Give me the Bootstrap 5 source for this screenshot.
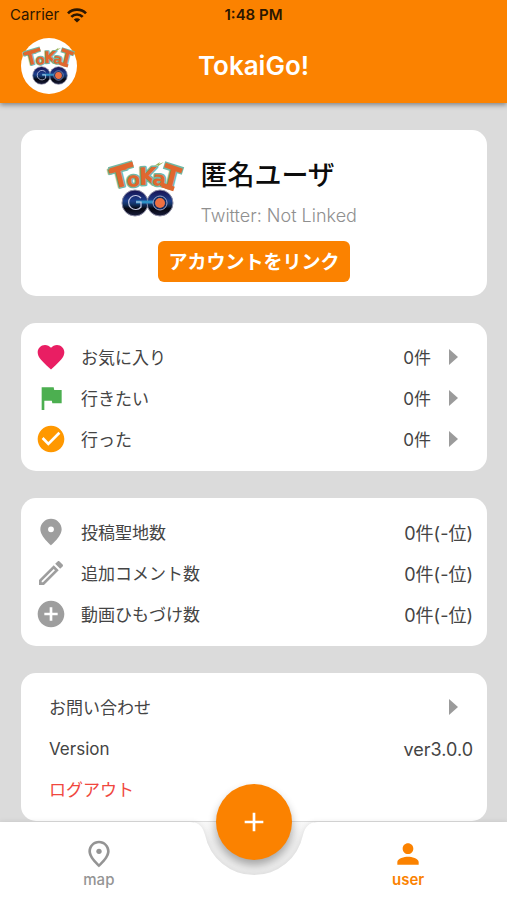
<!DOCTYPE html>
<html lang="ja">
<head>
<meta charset="utf-8">
<meta name="viewport" content="width=device-width, initial-scale=1">
<title>TokaiGo!</title>
<link href="https://cdn.jsdelivr.net/npm/bootstrap@5.3.0/dist/css/bootstrap.min.css" rel="stylesheet">
<style>
  :root { --brand: #fb8200; }
  body { font-family: Inter, "Noto Sans CJK JP", sans-serif; background: #dbdbdb; color: #444; }
  a { color: inherit; text-decoration: none; }
  .app-top { background: var(--brand); box-shadow: 0 2px 5px rgba(0,0,0,.4); z-index: 2; }
  .status-bar { height: 30px; font-size: 15px; line-height: 30px; color: #2b1600; padding: 0 10px; }
  .side-cell { flex: 1 1 0; }
  .title-bar { height: 73px; padding: 0 21px 2px; }
  .title-bar h1 { font-size: 26px; line-height: 30px; font-weight: 600; color: #fff; }
  .avatar { width: 56px; height: 56px; background: #fff; }
  .app-main { padding: 27px 20px 0 21px; gap: 27px; }
  .panel { background: #fff; border-radius: 15px; flex: none; }
  .profile { padding: 29px 0 14px; }
  .logo-side { flex: 0 0 38.5%; padding: 2px 16px 0 0; }
  .logo text { font-family: "DejaVu Sans", sans-serif; font-weight: 700; fill: #e0672f; stroke: #72b8a4; stroke-width: 3px; paint-order: stroke; stroke-linejoin: round; }
  .user-name { font-size: 27px; line-height: 34px; font-weight: 500; color: #0c0c0c; }
  .link-state { font-size: 18px; line-height: 24px; font-weight: 300; color: #8f8f8f; margin-top: 11px; }
  .btn-brand { --bs-btn-bg: var(--brand); --bs-btn-color: #fff; --bs-btn-hover-bg: #e67600; --bs-btn-hover-color: #fff;
    font-size: 19px; line-height: 27px; font-weight: 700; padding: 8px 10px 6px; border: 0; border-radius: 6px; margin-top: 13px; }
  .rows { padding: 13px 14px 12px; font-size: 17px; line-height: 25px; }
  .rows span, .plain-btn { padding-top: 3px; }
  .rows .val { font-size: 18px; }
  .indent { padding-left: 14px; }
  .line { height: 41px; }
  .ico { width: 32px; height: 32px; margin-right: 14px; flex: none; }
  .arrow { width: 9px; height: 16px; fill: #9b9b9b; margin: 0 15px 0 18px; flex: none; }
  .plain-btn { color: #f0473e; background: none; border: 0; }
  .app-nav { height: 78px; z-index: 3; }
  .nav-bg { filter: drop-shadow(0 -1px 2px rgba(0,0,0,.07)); }
  .nav-bg .fill { background: #fff; flex: 1 1 0; }
  .nav-bg svg { width: 136px; height: 78px; flex: none; display: block; }
  .tab { width: 39%; font-size: 15px; line-height: 20px; font-weight: 500; color: #949494; padding-top: 16px; }
  .tab.on { color: var(--brand); font-weight: 600; }
  .tab svg { width: 32px; height: 32px; fill: currentColor; }
  .fab { width: 76px; height: 76px; top: -38px; left: calc(50% - 38px); background: var(--brand); border: 0;
    box-shadow: 0 5px 9px rgba(0,0,0,.3); padding: 0; }
  .under { top: 0; left: calc(50% - 60px); width: 120px; height: 58px; background: linear-gradient(#f8f8f8, #ececec 35%); border-radius: 0 0 56px 56px; }
</style>
<script src="https://cdn.jsdelivr.net/npm/bootstrap@5.3.0/dist/js/bootstrap.bundle.min.js"></script>
</head>
<body>
<svg width="0" height="0" class="position-absolute" aria-hidden="true">
  <defs>
    <linearGradient id="disc" x1="0" y1="0" x2="0" y2="1">
      <stop offset="0" stop-color="#17104f"/><stop offset=".42" stop-color="#1c3f8c"/>
      <stop offset=".55" stop-color="#123263"/><stop offset=".72" stop-color="#05060f"/><stop offset="1" stop-color="#191d3d"/>
    </linearGradient>
  </defs>
  <symbol id="discs" viewBox="0 0 76 56">
    <circle cx="27" cy="42" r="13" fill="url(#disc)" stroke="#8b8ba4" stroke-width="1"/>
    <circle cx="52" cy="42" r="13" fill="url(#disc)" stroke="#8b8ba4" stroke-width="1"/>
    <path d="M28 41h17" stroke="#2d91c5" stroke-width="3"/>
    <path d="M33 37a7 7 0 1 0 0 9v-5h-5" fill="none" stroke="#c4c8e4" stroke-width="1.2"/>
    <circle cx="52" cy="42" r="7" fill="#102c61" stroke="#9aa5cb" stroke-width="1"/>
    <circle cx="52" cy="42" r="5" fill="#ee7041"/>
  </symbol>
  <symbol id="tri" viewBox="0 0 9 16"><path d="M0 0L9 8L0 16z"/></symbol>
</svg>

<div class="d-flex flex-column vh-100 overflow-hidden">
  <header class="app-top position-relative">
    <div class="status-bar d-flex">
      <div class="side-cell d-flex align-items-center">
        <span>Carrier</span>
        <svg class="ms-2" width="20" height="15" viewBox="0 0 20 15" fill="none" stroke="#2b1600" stroke-width="2.7" aria-hidden="true">
          <path d="M1 5.4a12.8 12.8 0 0 1 18 0M4.3 8.9a8 8 0 0 1 11.4 0"/><path d="M10 14.6L6.8 11.5a4.6 4.6 0 0 1 6.4 0z" fill="#2b1600" stroke="none"/>
        </svg>
      </div>
      <span class="fw-semibold">1:48 PM</span>
      <div class="side-cell"></div>
    </div>
    <div class="title-bar d-flex align-items-center">
      <div class="side-cell">
        <div class="avatar rounded-circle d-flex align-items-center justify-content-center">
          <svg class="logo overflow-visible" width="52" height="38" viewBox="0 0 76 56" role="img" aria-label="Tokai GO">
            <path d="M1 10L25 3M56 4L75 10" stroke="#72b8a4" stroke-width="8"/>
            <text font-size="27" transform="translate(5 28) rotate(-14)">T</text>
            <text font-size="20" transform="translate(19 26) rotate(-4)">o</text>
            <text font-size="24" transform="translate(31 24) rotate(-2)">K</text>
            <text font-size="20" transform="translate(44 24) rotate(6)">a</text>
            <text font-size="28" transform="translate(56 26) rotate(14)">I</text>
            <path d="M2 10L25 3M57 4L74 10M54 24L66 28" stroke="#e0672f" stroke-width="5"/>
            <path d="M46 5l6-4-1 2 5-2-7 5 1-2z" fill="#9bb45d"/>
            <use href="#discs"/>
          </svg>
        </div>
      </div>
      <h1 class="m-0">TokaiGo!</h1>
      <div class="side-cell"></div>
    </div>
  </header>

  <main class="app-main d-flex flex-column flex-grow-1 overflow-hidden">
    <section class="panel profile">
      <div class="d-flex align-items-start">
        <div class="logo-side d-flex justify-content-end">
          <svg class="logo overflow-visible" width="76" height="56" viewBox="0 0 76 56" role="img" aria-label="Tokai GO">
            <path d="M1 10L25 3M56 4L75 10" stroke="#72b8a4" stroke-width="8"/>
            <text font-size="27" transform="translate(5 28) rotate(-14)">T</text>
            <text font-size="20" transform="translate(19 26) rotate(-4)">o</text>
            <text font-size="24" transform="translate(31 24) rotate(-2)">K</text>
            <text font-size="20" transform="translate(44 24) rotate(6)">a</text>
            <text font-size="28" transform="translate(56 26) rotate(14)">I</text>
            <path d="M2 10L25 3M57 4L74 10M54 24L66 28" stroke="#e0672f" stroke-width="5"/>
            <path d="M46 5l6-4-1 2 5-2-7 5 1-2z" fill="#9bb45d"/>
            <use href="#discs"/>
          </svg>
        </div>
        <div>
          <h2 class="user-name m-0">匿名ユーザ</h2>
          <div class="link-state">Twitter: Not Linked</div>
        </div>
      </div>
      <div class="text-center"><button type="button" class="btn btn-brand">アカウントをリンク</button></div>
    </section>

    <section class="panel rows">
      <a href="#favorites" class="line d-flex align-items-center">
        <svg class="ico" viewBox="0 0 24 24" fill="#e91e63"><path d="M12 21.35l-1.45-1.32C5.4 15.36 2 12.28 2 8.5 2 5.42 4.42 3 7.5 3c1.74 0 3.41.81 4.5 2.09C13.09 3.81 14.76 3 16.5 3 19.58 3 22 5.42 22 8.5c0 3.78-3.4 6.86-8.55 11.54z"/></svg>
        <span>お気に入り</span><span class="ms-auto">0件</span><svg class="arrow"><use href="#tri"/></svg>
      </a>
      <a href="#wish" class="line d-flex align-items-center">
        <svg class="ico" viewBox="0 0 24 24" fill="#4caf50"><path d="M14.4 6L14 4H5v17h2v-7h5.6l.4 2h7V6z"/></svg>
        <span>行きたい</span><span class="ms-auto">0件</span><svg class="arrow"><use href="#tri"/></svg>
      </a>
      <a href="#visited" class="line d-flex align-items-center">
        <svg class="ico" viewBox="0 0 24 24" fill="#ff9800"><path d="M12 2C6.48 2 2 6.48 2 12s4.48 10 10 10 10-4.48 10-10S17.52 2 12 2zm-2 15l-5-5 1.41-1.41L10 14.17l7.59-7.59L19 8z"/></svg>
        <span>行った</span><span class="ms-auto">0件</span><svg class="arrow"><use href="#tri"/></svg>
      </a>
    </section>

    <section class="panel rows">
      <div class="line d-flex align-items-center">
        <svg class="ico" viewBox="0 0 24 24" fill="#9e9e9e"><path d="M12 2C7.6 2 4 5.6 4 10c0 5.4 8 12 8 12s8-6.6 8-12c0-4.4-3.6-8-8-8zm0 10.2a2.2 2.2 0 1 1 0-4.4 2.2 2.2 0 0 1 0 4.4z"/></svg>
        <span>投稿聖地数</span><span class="ms-auto val">0件(-位)</span>
      </div>
      <div class="line d-flex align-items-center">
        <svg class="ico" viewBox="0 0 24 24" fill="#9e9e9e"><path d="M14.06 9.02l.92.92L5.92 19H5v-.92l9.06-9.06M17.66 3c-.25 0-.51.1-.7.29l-1.83 1.83 3.75 3.75 1.83-1.83c.39-.39.39-1.02 0-1.41l-2.34-2.34c-.2-.2-.45-.29-.71-.29zm-3.6 3.19L3 17.25V21h3.75L17.81 9.94l-3.75-3.75z"/></svg>
        <span>追加コメント数</span><span class="ms-auto val">0件(-位)</span>
      </div>
      <div class="line d-flex align-items-center">
        <svg class="ico" viewBox="0 0 24 24" fill="#9e9e9e"><path d="M12 2C6.48 2 2 6.48 2 12s4.48 10 10 10 10-4.48 10-10S17.52 2 12 2zm5 11h-4v4h-2v-4H7v-2h4V7h2v4h4v2z"/></svg>
        <span>動画ひもづけ数</span><span class="ms-auto val">0件(-位)</span>
      </div>
    </section>

    <section class="panel rows">
      <a href="#contact" class="line indent d-flex align-items-center">
        <span>お問い合わせ</span><svg class="arrow ms-auto"><use href="#tri"/></svg>
      </a>
      <div class="line indent d-flex align-items-center">
        <span>Version</span><span class="ms-auto val">ver3.0.0</span>
      </div>
      <div class="line indent d-flex align-items-center">
        <button type="button" class="plain-btn px-0 pb-0">ログアウト</button>
      </div>
    </section>
  </main>

  <nav class="app-nav position-relative flex-shrink-0">
    <div class="under position-absolute"></div>
    <div class="nav-bg d-flex position-absolute top-0 start-0 w-100 h-100">
      <div class="fill"></div>
      <svg viewBox="0 0 136 78" aria-hidden="true"><path d="M0 0H4C14 0 17 6 19 13A50 50 0 0 0 117 13C119 6 122 0 132 0H136V78H0z" fill="#fff"/></svg>
      <div class="fill"></div>
    </div>
    <div class="d-flex justify-content-between position-relative">
      <a href="#map" class="tab d-flex flex-column align-items-center">
        <svg viewBox="0 0 24 24" aria-hidden="true"><path d="M12 2C7.6 2 4 5.6 4 10c0 5.4 8 12 8 12s8-6.6 8-12c0-4.4-3.6-8-8-8zm0 2c3.3 0 6 2.7 6 6 0 3.1-3.3 7-6 9.5C9.3 17 6 13.1 6 10c0-3.3 2.7-6 6-6z"/><circle cx="12" cy="10" r="2"/></svg>
        <span>map</span>
      </a>
      <a href="#user" class="tab on d-flex flex-column align-items-center" aria-current="page">
        <svg viewBox="0 0 24 24" aria-hidden="true"><path d="M12 12c2.21 0 4-1.79 4-4s-1.79-4-4-4-4 1.79-4 4 1.79 4 4 4zm0 2c-2.67 0-8 1.34-8 4v2h16v-2c0-2.66-5.33-4-8-4z"/></svg>
        <span>user</span>
      </a>
    </div>
    <button type="button" class="fab position-absolute rounded-circle d-flex align-items-center justify-content-center" aria-label="追加">
      <svg width="32" height="32" viewBox="0 0 24 24" fill="#fff"><path d="M19 13h-6v6h-2v-6H5v-2h6V5h2v6h6z"/></svg>
    </button>
  </nav>
</div>
</body>
</html>
